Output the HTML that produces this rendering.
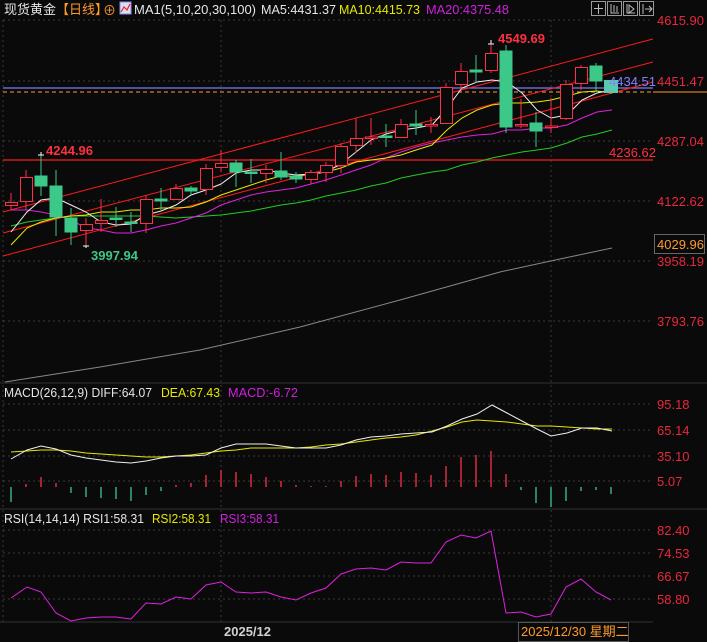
<!DOCTYPE html><html><head><meta charset="utf-8"><style>
html,body{margin:0;padding:0;background:#0a0a0a;width:707px;height:642px;overflow:hidden}
svg{display:block}
text{font-family:"Liberation Sans","Noto Sans CJK SC",sans-serif;font-size:13px}
</style></head><body>
<svg width="707" height="642" viewBox="0 0 707 642" xmlns="http://www.w3.org/2000/svg">
<rect width="707" height="642" fill="#0a0a0a"/>
<g stroke="#3a3a3a" stroke-dasharray="2,3" stroke-width="1">
<line x1="3" y1="20" x2="653" y2="20"/><line x1="3" y1="81" x2="653" y2="81"/><line x1="3" y1="141" x2="653" y2="141"/><line x1="3" y1="201" x2="653" y2="201"/><line x1="3" y1="261" x2="653" y2="261"/><line x1="3" y1="321" x2="653" y2="321"/>
<line x1="3" y1="404" x2="653" y2="404"/><line x1="3" y1="430" x2="653" y2="430"/><line x1="3" y1="456" x2="653" y2="456"/><line x1="3" y1="481" x2="653" y2="481"/>
<line x1="3" y1="530" x2="653" y2="530"/><line x1="3" y1="553" x2="653" y2="553"/><line x1="3" y1="576" x2="653" y2="576"/><line x1="3" y1="599" x2="653" y2="599"/>
<line x1="221" y1="20" x2="221" y2="622"/><line x1="551" y1="20" x2="551" y2="622"/>
<line x1="3" y1="20" x2="3" y2="622"/>
</g>
<g stroke="#333" stroke-width="1"><line x1="0" y1="383" x2="707" y2="383"/><line x1="0" y1="509" x2="707" y2="509"/><line x1="0" y1="622" x2="653" y2="622"/></g>
<text x="4" y="14" fill="#e6e6e6">现货黄金</text>
<text x="56" y="14" fill="#ff9a2a">【日线】</text>
<text x="103" y="15" fill="#ff9a2a" font-size="12">⊕</text>
<rect x="120" y="2" width="11" height="12" fill="#dde" stroke="#88f"/><polyline points="121,12 124,7 127,10 130,4" fill="none" stroke="#e22" stroke-width="1.2"/>
<text x="134" y="14" fill="#e6e6e6" textLength="122" lengthAdjust="spacingAndGlyphs">MA1(5,10,20,30,100)</text>
<text x="261" y="14" fill="#e6e6e6" textLength="75" lengthAdjust="spacingAndGlyphs">MA5:4431.37</text>
<text x="339" y="14" fill="#e8e800" textLength="81" lengthAdjust="spacingAndGlyphs">MA10:4415.73</text>
<text x="426" y="14" fill="#d020e0" textLength="83" lengthAdjust="spacingAndGlyphs">MA20:4375.48</text>
<g fill="none" stroke="#999"><rect x="591.5" y="1.5" width="14" height="14"/><rect x="607.5" y="1.5" width="14" height="14"/><rect x="623.5" y="1.5" width="14" height="14"/><rect x="639.5" y="1.5" width="14" height="14"/></g>
<g stroke="#bbb" fill="none"><path d="M598.5 4v10M594 8.5h9"/><path d="M611 4v9h8M614 5v7M617 6v6"/><path d="M627 4v9h8M629 5l5 4-5 4z"/><path d="M643 4v10M645 9h6M649 6l3 3-3 3"/></g>
<g fill="#e8283c" font-size="13">
<text x="657" y="25">4615.90</text><text x="657" y="86">4451.47</text><text x="657" y="146">4287.04</text><text x="657" y="206">4122.62</text><text x="657" y="266">3958.19</text><text x="657" y="326">3793.76</text>
<text x="657" y="409">95.18</text><text x="657" y="435">65.14</text><text x="657" y="461">35.10</text><text x="657" y="486">5.07</text>
<text x="657" y="535">82.40</text><text x="657" y="558">74.53</text><text x="657" y="581">66.67</text><text x="657" y="604">58.80</text>
</g>
<rect x="654.5" y="234.5" width="50" height="19" fill="#0a0a0a" stroke="#666"/>
<text x="657" y="249" fill="#ff9a2a">4029.96</text>
<line x1="3" y1="160" x2="653" y2="160" stroke="#ff1a1a" stroke-width="1.2"/>
<text x="609" y="157" fill="#ff3040">4236.62</text>
<line x1="3" y1="88" x2="653" y2="88" stroke="#7a7aff" stroke-width="1.2"/>
<line x1="3" y1="92" x2="653" y2="92" stroke="#ff9a2a" stroke-dasharray="4,3"/>
<line x1="653" y1="92" x2="707" y2="92" stroke="#ff9a2a"/>
<g stroke="#ff1a1a" stroke-width="1"><line x1="3" y1="212" x2="653" y2="39"/><line x1="3" y1="233" x2="653" y2="62"/><line x1="3" y1="256" x2="653" y2="82"/></g>
<polyline fill="none" stroke="#888" points="5,382 100,367 200,350 300,327 400,300 500,272 560,259 612,248"/>
<polyline fill="none" stroke="#22cc22" points="11,226 27,222 41,220 56,218 71,216 86,216 101,216 116,216 131,216 146,216 161,217 176,218 191,217 206,216 221,215 236,213 251,211 266,208 281,205 296,203 311,200 326,196 341,193 356,190 371,186 386,183 401,178 416,175 432,172 447,170 462,165 477,162 492,158 507,155 522,152 537,150 551,148 567,143 582,137 597,134 612,130"/>
<polyline fill="none" stroke="#e020e0" points="11,210 27,210 41,212 56,215 71,220 86,228 101,230 116,233 131,233 146,230 161,226 176,223 191,218 206,213 221,205 236,200 251,195 266,192 281,190 296,188 311,184 326,180 341,175 356,170 371,165 386,158 401,152 416,147 432,143 447,140 462,137 477,135 492,134 507,130 522,130 537,128 551,128 567,125 582,118 597,112 612,110"/>
<polyline fill="none" stroke="#e8e800" points="11,245 27,228 41,222 56,218 71,216 86,215 101,212 116,212 131,210 146,210 161,208 176,208 191,207 206,202 221,195 236,190 251,185 266,180 281,176 296,176 311,174 326,172 341,168 356,162 371,160 386,158 401,155 416,150 432,145 447,130 462,118 477,110 492,105 507,103 522,103 537,102 551,100 567,96 582,92 597,91 612,93"/>
<polyline fill="none" stroke="#f0f0f0" points="11,232 27,212 41,200 56,198 71,205 86,212 101,222 116,225 131,224 146,215 161,211 176,205 191,195 206,190 221,184 236,173 251,170 266,170 281,173 296,175 311,174 326,172 341,164 356,152 371,140 386,134 401,130 416,128 432,125 447,108 462,88 477,82 492,80 507,82 522,93 537,110 551,118 567,115 582,100 597,93 612,90"/>
<g stroke="#ff2e4a" fill="#0a0a0a">
<line x1="11" y1="193" x2="11" y2="210"/><rect x="5.5" y="202.5" width="12" height="3"/>
<line x1="26" y1="170" x2="26" y2="210"/><rect x="20.5" y="177.5" width="12" height="24"/>
<line x1="86" y1="218" x2="86" y2="246"/><rect x="80.5" y="224.5" width="12" height="6"/>
<line x1="101" y1="199" x2="101" y2="232"/><rect x="95.5" y="220.5" width="12" height="3"/>
<line x1="146" y1="195" x2="146" y2="233"/><rect x="140.5" y="199.5" width="12" height="24"/>
<line x1="176" y1="184" x2="176" y2="200"/><rect x="170.5" y="188.5" width="12" height="11"/>
<line x1="206" y1="164" x2="206" y2="195"/><rect x="200.5" y="168.5" width="12" height="21"/>
<line x1="221" y1="150" x2="221" y2="172"/><rect x="215.5" y="163.5" width="12" height="4"/>
<line x1="266" y1="165" x2="266" y2="183"/><rect x="260.5" y="169.5" width="12" height="4"/>
<line x1="311" y1="170" x2="311" y2="184"/><rect x="305.5" y="172.5" width="12" height="7"/>
<line x1="326" y1="162" x2="326" y2="182"/><rect x="320.5" y="165.5" width="12" height="7"/>
<line x1="341" y1="143" x2="341" y2="173"/><rect x="335.5" y="146.5" width="12" height="19"/>
<line x1="356" y1="118" x2="356" y2="153"/><rect x="350.5" y="138.5" width="12" height="7"/>
<line x1="371" y1="118" x2="371" y2="145"/><rect x="365.5" y="137" width="12" height="1.5"/>
<line x1="401" y1="119" x2="401" y2="137"/><rect x="395.5" y="124.5" width="12" height="13"/>
<line x1="431" y1="117" x2="431" y2="133"/><rect x="425.5" y="124.5" width="12" height="1.5"/>
<line x1="446" y1="83" x2="446" y2="123"/><rect x="440.5" y="87.5" width="12" height="36"/>
<line x1="461" y1="63" x2="461" y2="89"/><rect x="455.5" y="71.5" width="12" height="13"/>
<line x1="491" y1="45" x2="491" y2="73"/><rect x="485.5" y="53.5" width="12" height="17"/>
<line x1="521" y1="99" x2="521" y2="128"/><rect x="515.5" y="124.5" width="12" height="1.5"/>
<line x1="551" y1="98" x2="551" y2="133"/><rect x="545.5" y="126" width="12" height="1.5"/>
<line x1="566" y1="80" x2="566" y2="120"/><rect x="560.5" y="84.5" width="12" height="34"/>
<line x1="581" y1="65" x2="581" y2="90"/><rect x="575.5" y="67.5" width="12" height="16"/>
</g>
<g stroke="#3cc888" fill="#3cc888">
<line x1="41" y1="155" x2="41" y2="196"/><rect x="35" y="176" width="12" height="10"/>
<line x1="56" y1="170" x2="56" y2="236"/><rect x="50" y="186" width="12" height="31"/>
<line x1="71" y1="208" x2="71" y2="245"/><rect x="65" y="218" width="12" height="14"/>
<line x1="116" y1="207" x2="116" y2="227"/><rect x="110" y="218" width="12" height="1.5"/>
<line x1="131" y1="212" x2="131" y2="232"/><rect x="125" y="222" width="12" height="1.5"/>
<line x1="161" y1="188" x2="161" y2="210"/><rect x="155" y="199" width="12" height="2"/>
<line x1="191" y1="186" x2="191" y2="195"/><rect x="185" y="188" width="12" height="3"/>
<line x1="236" y1="160" x2="236" y2="187"/><rect x="230" y="163" width="12" height="9"/>
<line x1="251" y1="159" x2="251" y2="183"/><rect x="245" y="172" width="12" height="1.5"/>
<line x1="281" y1="152" x2="281" y2="180"/><rect x="275" y="171" width="12" height="6"/>
<line x1="296" y1="172" x2="296" y2="183"/><rect x="290" y="176" width="12" height="3"/>
<line x1="386" y1="124" x2="386" y2="147"/><rect x="380" y="136" width="12" height="1.5"/>
<line x1="416" y1="110" x2="416" y2="135"/><rect x="410" y="124" width="12" height="2"/>
<line x1="476" y1="55" x2="476" y2="83"/><rect x="470" y="70" width="12" height="2"/>
<line x1="506" y1="45" x2="506" y2="133"/><rect x="500" y="51" width="12" height="76"/>
<line x1="536" y1="112" x2="536" y2="147"/><rect x="530" y="123" width="12" height="8"/>
<line x1="596" y1="63" x2="596" y2="92"/><rect x="590" y="66" width="12" height="15"/>
</g>
<rect x="604" y="80" width="14" height="13" fill="#5cc8b0"/>
<text x="609" y="86" fill="#8080ff">4434.51</text>
<g fill="#fff" stroke="#fff"><path d="M41 155v-3M38 155h6M86 246v2M83 246h6M491 44v-4M488 44h6"/></g>
<text x="46" y="155" fill="#ff3040" font-weight="bold">4244.96</text>
<text x="91" y="260" fill="#3cc888" font-weight="bold">3997.94</text>
<text x="498" y="43" fill="#ff3040" font-weight="bold">4549.69</text>
<text x="4" y="397" fill="#e6e6e6" font-size="12.5" textLength="148" lengthAdjust="spacingAndGlyphs">MACD(26,12,9) DIFF:64.07</text>
<text x="161" y="397" fill="#e8e800" font-size="12.5" textLength="59" lengthAdjust="spacingAndGlyphs">DEA:67.43</text>
<text x="228" y="397" fill="#d020e0" font-size="12.5" textLength="70" lengthAdjust="spacingAndGlyphs">MACD:-6.72</text>
<g stroke-width="1.3">
<g stroke="#3cc888"><line x1="11" y1="487" x2="11" y2="502"/><line x1="71" y1="487" x2="71" y2="493"/><line x1="86" y1="487" x2="86" y2="497"/><line x1="101" y1="487" x2="101" y2="498"/><line x1="116" y1="487" x2="116" y2="499"/><line x1="131" y1="487" x2="131" y2="501"/><line x1="146" y1="487" x2="146" y2="495"/><line x1="161" y1="487" x2="161" y2="491"/><line x1="521" y1="487" x2="521" y2="490"/><line x1="536" y1="487" x2="536" y2="503"/><line x1="551" y1="487" x2="551" y2="507"/><line x1="566" y1="487" x2="566" y2="501"/><line x1="581" y1="487" x2="581" y2="491"/><line x1="596" y1="487" x2="596" y2="490"/><line x1="611" y1="487" x2="611" y2="494"/></g>
<g stroke="#ff2e4a"><line x1="26" y1="487" x2="26" y2="484"/><line x1="41" y1="487" x2="41" y2="477"/><line x1="56" y1="487" x2="56" y2="483"/><line x1="176" y1="487" x2="176" y2="485"/><line x1="191" y1="487" x2="191" y2="483"/><line x1="206" y1="487" x2="206" y2="475"/><line x1="221" y1="487" x2="221" y2="470"/><line x1="236" y1="487" x2="236" y2="472"/><line x1="251" y1="487" x2="251" y2="474"/><line x1="266" y1="487" x2="266" y2="477"/><line x1="281" y1="487" x2="281" y2="481"/><line x1="296" y1="487" x2="296" y2="485"/><line x1="311" y1="487" x2="311" y2="486"/><line x1="326" y1="487" x2="326" y2="486"/><line x1="341" y1="487" x2="341" y2="481"/><line x1="356" y1="487" x2="356" y2="476"/><line x1="371" y1="487" x2="371" y2="474"/><line x1="386" y1="487" x2="386" y2="475"/><line x1="401" y1="487" x2="401" y2="472"/><line x1="416" y1="487" x2="416" y2="473"/><line x1="431" y1="487" x2="431" y2="475"/><line x1="446" y1="487" x2="446" y2="466"/><line x1="461" y1="487" x2="461" y2="457"/><line x1="476" y1="487" x2="476" y2="455"/><line x1="491" y1="487" x2="491" y2="451"/><line x1="506" y1="487" x2="506" y2="474"/></g>
</g>
<polyline fill="none" stroke="#e8e800" points="11,452 27,451 41,450 56,450 71,451 86,453 101,454 116,455 131,456 146,457 161,457 176,456 191,455 206,453 221,451 236,450 251,448 266,448 281,448 296,448 311,447 326,445 341,444 356,442 371,440 386,438 401,437 416,435 432,431 447,427 462,422 477,420 492,421 507,422 522,424 537,426 551,426 567,427 582,428 597,429 612,429"/>
<polyline fill="none" stroke="#f0f0f0" points="11,459 27,450 41,446 56,449 71,455 86,458 101,460 116,462 131,463 146,461 161,458 176,456 191,456 206,455 221,448 236,444 251,444 266,444 281,446 296,448 311,448 326,448 341,445 356,440 371,437 386,436 401,434 416,433 432,432 447,426 462,419 477,414 492,405 507,413 522,421 537,429 551,436 567,433 582,428 597,428 612,431"/>
<text x="4" y="523" fill="#e6e6e6" font-size="12.5" textLength="140" lengthAdjust="spacingAndGlyphs">RSI(14,14,14) RSI1:58.31</text>
<text x="152" y="523" fill="#e8e800" font-size="12.5" textLength="59" lengthAdjust="spacingAndGlyphs">RSI2:58.31</text>
<text x="220" y="523" fill="#d020e0" font-size="12.5" textLength="59" lengthAdjust="spacingAndGlyphs">RSI3:58.31</text>
<polyline fill="none" stroke="#e020e0" points="11,598 27,587 41,592 56,613 71,621 86,618 101,617 116,617 131,619 146,603 161,604 176,597 191,599 206,585 221,582 236,592 251,593 266,592 281,597 296,600 311,593 326,588 341,574 356,569 371,568 386,570 401,562 416,563 431,563 446,542 461,535 476,538 491,531 506,613 521,612 536,617 551,614 566,587 581,579 596,592 611,600"/>
<text x="224" y="636" fill="#d0d0d0" font-weight="bold" font-size="12.5">2025/12</text>
<rect x="518.5" y="622.5" width="110" height="19" fill="#0a0a0a" stroke="#555"/>
<text x="521" y="636" fill="#ff9a2a" font-size="12.5">2025/12/30 星期二</text>
</svg>
</body></html>
